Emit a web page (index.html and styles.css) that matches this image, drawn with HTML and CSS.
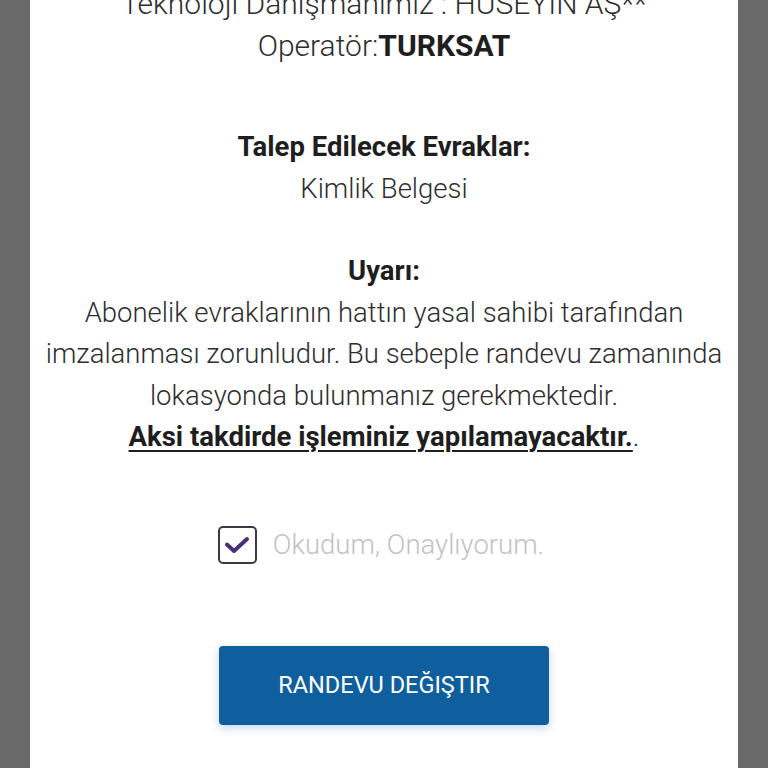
FILE: index.html
```html
<!DOCTYPE html>
<html lang="tr">
<head>
<meta charset="utf-8">
<title>Randevu</title>
<link rel="stylesheet" href="styles.css">
</head>
<body>
<div class="card">
  <div class="info">
    <p class="line">Teknoloji Danışmanımız : HÜSEYİN AŞ**</p>
    <p class="line">Operatör:<b>TURKSAT</b></p>
  </div>
  <div class="section docs">
    <p class="line title">Talep Edilecek Evraklar:</p>
    <p class="line">Kimlik Belgesi</p>
  </div>
  <div class="section warn">
    <p class="line title">Uyarı:</p>
    <p class="line">Abonelik evraklarının hattın yasal sahibi tarafından<br>imzalanması zorunludur. Bu sebeple randevu zamanında<br>lokasyonda bulunmanız gerekmektedir.</p>
    <p class="line"><b class="u">Aksi takdirde işleminiz yapılamayacaktır.</b>.</p>
  </div>
  <label class="confirm">
    <span class="box">
      <svg width="26" height="18" viewBox="0 0 26 18"><path d="M3 8.5 L10 15 L23 3" fill="none" stroke="#4a2f78" stroke-width="4" stroke-linecap="round" stroke-linejoin="round"/></svg>
    </span>
    <span class="confirm-text">Okudum, Onaylıyorum.</span>
  </label>
  <div class="actions">
    <button class="btn">RANDEVU DEĞIŞTIR</button>
  </div>
</div>
</body>
</html>
```
FILE: styles.css
```css
html, body {
  margin: 0;
  padding: 0;
  background: #6a6a6a;
  height: 768px;
  overflow: hidden;
}
.card {
  margin: -17px 30px 0 30px;
  background: #ffffff;
  height: 820px;
  text-align: center;
  font-family: Roboto, "Noto Sans", sans-serif;
  font-weight: 300;
  font-size: 27.5px;
  color: #2e2e2e;
  padding: 0 4px;
  box-sizing: border-box;
}
.line {
  margin: 0;
  line-height: 41.5px;
  white-space: nowrap;
}
.info .line {
  font-size: 30px;
}
.title {
  font-weight: 700;
  color: #1e1e1e;
}
b {
  font-weight: 700;
  color: #1e1e1e;
}
.docs { margin-top: 60px; }
.warn { margin-top: 41px; }
.u {
  text-decoration: underline;
  text-underline-offset: 4px;
  text-decoration-thickness: 2px;
}
.confirm {
  display: flex;
  align-items: center;
  justify-content: center;
  gap: 16px;
  margin-top: 68px;
  margin-left: -6px;
}
.box {
  width: 35px;
  height: 34px;
  border: 2.5px solid #3b3848;
  border-radius: 5px;
  display: flex;
  align-items: center;
  justify-content: center;
}
.confirm-text {
  color: #c2c2c2;
  font-size: 27.5px;
  font-weight: 300;
}
.actions {
  display: flex;
  justify-content: center;
  margin-top: 82px;
}
.btn {
  width: 330px;
  height: 79px;
  background: #0f5f9f;
  color: #ffffff;
  border: none;
  border-radius: 4px;
  font-family: Roboto, "Noto Sans", sans-serif;
  font-size: 23.5px;
  font-weight: 400;
  box-shadow: 0 3px 8px rgba(40, 80, 200, 0.25);
}
```
